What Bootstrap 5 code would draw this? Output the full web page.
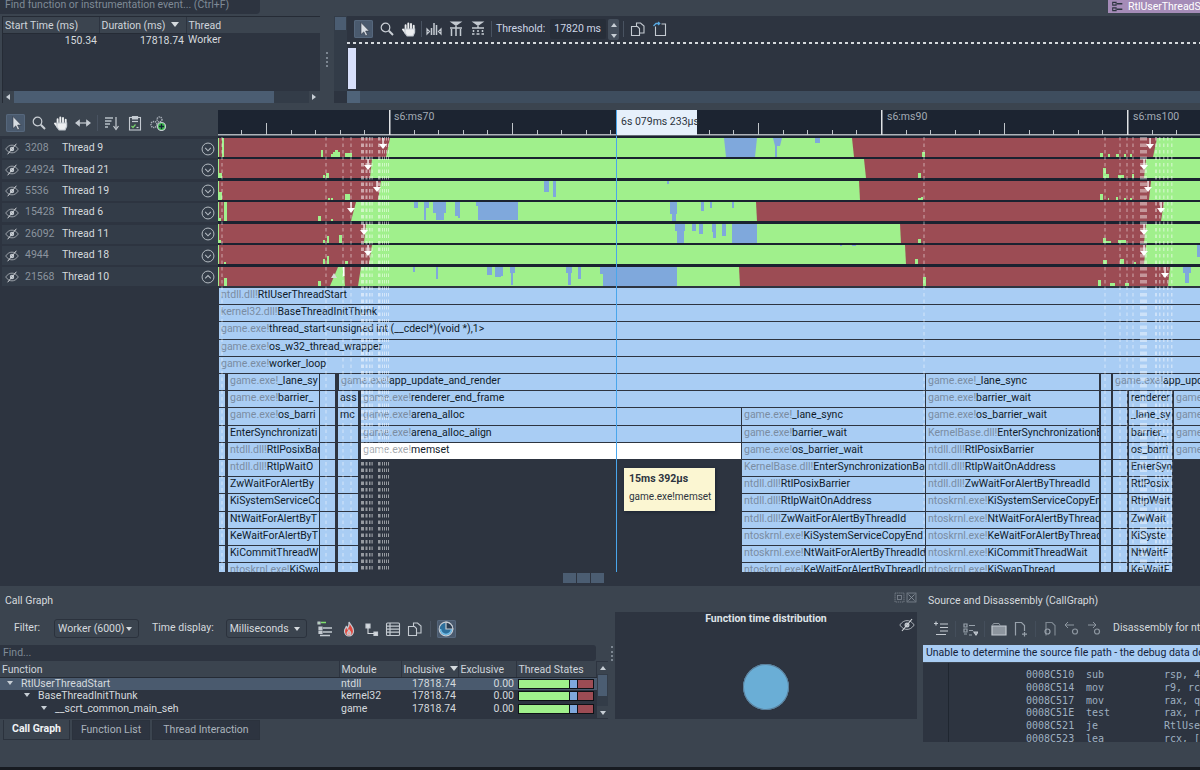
<!doctype html>
<html lang="en">
<head>
<meta charset="utf-8">
<title>Concurrency profiler</title>
<link href="https://cdn.jsdelivr.net/npm/bootstrap@5.3.0/dist/css/bootstrap.min.css" rel="stylesheet">
<style>
:root{--panel:#3b444f;--deep:#2d3440;--rowbg:#333c48;--sel:#4a5a6e;--txt:#d5dade;--dim:#8b949e;--line:#4b5562}
html,body{width:1200px;height:770px;overflow:hidden}
body{background:var(--panel);color:var(--txt);font-family:Roboto,"Noto Sans",sans-serif;font-size:10.5px;line-height:1.2}
.app{width:1200px;height:770px}
.topbar{height:15px;flex:none;overflow:hidden}
.searchbox{width:260px;height:14px;background:var(--deep);border-bottom-right-radius:4px;color:#7f8a96;padding-left:5px;font-size:10.5px;line-height:9px;overflow:hidden;white-space:nowrap}
.stacktag{width:92px;height:13px;background:#a58cb8;color:#fff;font-size:10.5px;line-height:11px;white-space:nowrap;overflow:hidden;gap:5px;padding-left:4px}
.stacktag .ico{width:11px;height:11px}
.summary{height:88px;flex:none;padding-top:1px}
.evpane{width:318px;margin-left:2px;background:var(--deep);border:1px solid #252b35;border-width:1px 0 0 1px}
.grid-t{--bs-table-bg:transparent;--bs-table-color:var(--txt);--bs-table-border-color:transparent;table-layout:fixed;margin:0;color:var(--txt);font-size:10.5px}
.grid-t th,.grid-t td{padding:0 2px;background:transparent;color:var(--txt);border:0;white-space:nowrap;overflow:hidden;font-weight:400;box-shadow:none}
.grid-t th{height:16px;background:var(--panel);border-right:1px solid #2d3440;border-bottom:1px solid #252b35;color:#cfd5db}
.evtable{width:317px}
.evtable td{line-height:14px}
.c-96{width:96px}.c-87{width:87px}.c-339{width:339px}.c-62{width:62px}.c-57{width:57px}.c-58{width:58px}
.sortdn::after{content:"";display:inline-block;border:4px solid transparent;border-top:5px solid #d5dade;border-bottom:0;margin-left:5px;vertical-align:2px}
.hscroll{height:12px;background:#333c48;flex:none}
.arrbtn{width:11px;height:12px;background:var(--panel);position:relative;flex:none}
.arr-l::after,.arr-r::after,.arr-u::after,.arr-d::after{content:"";position:absolute;left:3px;top:3px;border:3px solid transparent}
.arr-l::after{border-right:4px solid #c7ced5;border-left:0}
.arr-r::after{border-left:4px solid #c7ced5;border-right:0}
.arr-u::after{border-bottom:4px solid #c7ced5;border-top:0;top:4px;left:3px}
.arr-d::after{border-top:4px solid #c7ced5;border-bottom:0;top:5px;left:3px}
.thumb{background:#4b5d72}
.thumb-h{width:260px}
.thumb-v{height:21px;margin:1px}
.gripcol{width:14px;flex:none}
.gripv{width:2px;height:15px;border-left:2px dotted #7c8691}
.histpane{background:var(--deep);min-width:0}
.histmain{min-height:0}
.histcol{min-width:0}
.vbar{width:13px;background:#333c48;flex:none}
.vthumb{height:13px;margin:1px;background:#4b5d72}
.tbar{gap:6px;height:26px;padding-left:7px;align-items:center;background:var(--deep);flex:none}
.tb{--bs-btn-padding-x:0;--bs-btn-padding-y:0;--bs-btn-border-width:0;width:16px;height:18px;display:inline-flex;align-items:center;justify-content:center;border-radius:2px;flex:none}
.tb.on{width:19px;background:var(--sel);box-shadow:inset 0 0 0 1px #56677c}
.ico{width:16px;height:16px;fill:none;stroke:#c4cad1;stroke-width:1.2;flex:none;display:block}
.tsep{width:1px;height:16px;background:#495361;flex:none}
.sep-a{margin:0 -2px}.sep-b{margin:0 -2px 0 -1px}.sep-c{margin-left:-2px}
.sep-dim{opacity:.7}
.ms-1px{margin-left:1px}
.thlabel{color:#cdd6e6;font-size:10.5px}
.spinbox{width:56px;height:20px;background:#272e39;color:#cdd6e6;padding-left:4px;line-height:19px;border-radius:2px;font-size:10.5px;margin-left:-1px}
.spinbtns{width:11px;height:21px;background:#444e5b;position:relative;border-radius:2px;margin-left:-4px}
.spin-u,.spin-d{position:absolute;left:0;right:0;display:block;height:50%}
.spin-u{top:0}.spin-d{bottom:0}
.dashrule{height:2px;flex:none;background:repeating-linear-gradient(90deg,#d5d9dd 0 3px,transparent 3px 6px)}
.minibar{width:8px;height:41px;background:#d8e0fb;margin:4px 0 0 1px}
.hscroll2{height:12px;flex:none;background:#3e4d5e;margin-left:13px}
.hthumb2{width:13px;background:#4f6379}
.bandgap{height:7px;flex:none}
.rulerrow{height:26px;flex:none}
.rulertools{width:218px;flex:none;gap:6px;padding-left:6px;align-items:center}
.rulertools .tb-shift{margin-left:1px}
.rulerbox{width:982px;height:26px;background:#1c2431;position:relative;overflow:hidden}
.rulersvg{display:block;position:absolute;left:0;top:0;width:982px;height:26px}
.rlabel{position:absolute;top:1px;color:#a3abb5;font-size:10.5px}
.rl-70{left:176px}.rl-90{left:669px}.rl-100{left:915px}
.nowbox{position:absolute;left:398px;top:0;width:81px;height:25px;background:#e6f0fb;color:#2d3440;line-height:23px;padding-left:4px;font-size:10.5px;white-space:nowrap;border-left:1px solid #49a6ec}
.timeline{height:436px;flex:none;background:var(--deep)}
.threads{width:218px;flex:none;padding:3px 0 0 2px;gap:2.42px}
.thr{height:19px;background:var(--rowbg);color:var(--txt);flex:none}
.thr .pid{width:37px;color:var(--dim);margin-left:6px;flex:none;font-size:10.5px}
.thr .nm{flex:1;font-size:10.5px}
.thr .eyeico{width:14px;height:14px;margin-left:3px}
.thr .chev{width:14px;height:14px;margin-right:3px}
.canvas{width:982px;position:relative;overflow:hidden}
.tracks{display:block;width:982px;height:150px}
.flame{position:relative;height:286px;overflow:hidden}
.fb{position:absolute;height:16.2px;background:#a9cdf4;color:#101b2a;line-height:14px;padding-left:2px;overflow:hidden;white-space:nowrap;font-size:10.5px}
.fb i{font-style:normal;color:#7a8ca2}
.fb.hot{background:#fff}
.fb.hot i{color:#a4a8ad}
.overlay{position:absolute;left:0;top:0;width:982px;height:436px;pointer-events:none}
.cursorline{position:absolute;left:398px;top:0;bottom:0;width:1px;background:#49a6ec}
.tip{position:absolute;left:406px;top:332px;width:91px;height:43px;background:#fbf6d2;color:#2d3440;padding:5px 5px;font-size:10px;box-shadow:1px 1px 3px #1a2230;z-index:3;white-space:nowrap}
.tip b{display:block;font-size:10.5px;margin-bottom:5px;font-weight:700}
.strip{height:14px;flex:none;background:var(--deep);gap:1px;padding:1px 0 0 563px}
.strip span{display:block;width:13px;height:10px;background:#4b5d72}
.bottom{height:156px;flex:none}
.cgpanel{width:918px;flex:none;min-width:0}
.srcpanel{margin-left:5px;min-width:0;flex:1;overflow:hidden}
.ptitle{height:26px;padding:9px 0 0 5px;font-size:10.5px;flex:none;color:#d5dade}
.wincontrols{gap:1px;margin:-3px 1px 0 0}
.wincontrols .ico{width:11px;height:11px}
.cgbody{height:107px;flex:none}
.cgmain{width:608px;flex:none}
.cgtools{height:33px;flex:none;padding-left:14px;align-items:center}
.ddt{--bs-btn-padding-y:0;--bs-btn-padding-x:3px;--bs-btn-font-size:10.5px;--bs-btn-color:#d5dade;--bs-btn-border-color:#2b323d;--bs-btn-hover-color:#d5dade;--bs-btn-border-radius:3px;height:19px;line-height:17px;background:var(--panel);display:inline-flex;align-items:center;justify-content:space-between;color:#d5dade;border:1px solid #2b323d;flex:none}
.ddt::after{border-top:.4em solid #d5dade;border-right:.35em solid transparent;border-left:.35em solid transparent;border-bottom:0;margin:0 3px 0 0}
.dd-f{width:85px;margin-left:14px}
.dd-t{width:81px;margin-left:12px}
.lb-time{margin-left:13px}
.tb-a{margin-left:10px}.tb-b{margin-left:8px}.tb-c{margin-left:6px}
.sep-d{margin:0 6px 0 7px}
.findbox{height:16px;padding:0 3px;background:var(--deep);font-size:10.5px;color:#7f8a96;line-height:15px;flex:none;width:596px;border-radius:0 3px 3px 0}
.cgwrap{background:var(--deep);height:58px;align-items:flex-start;width:608px}
.cgtable{width:597px}
.cgtable th{height:16px}
.cgtable td{height:13px;line-height:12px;padding:0 2px}
.cgtable tr.picked td{background:var(--sel)}
.tri{display:inline-block;border:3.5px solid transparent;border-top:4px solid #c7ced5;border-bottom:0;margin-right:8px;vertical-align:2px}
.stbar{display:flex;height:10px;width:76px;background:#0e1116;padding:1px;gap:1px;margin-top:1px}
.stbar span{display:block}
.st-g{width:50px;background:#a0f08c}.st-b{width:7px;background:#7fa8dc}.st-r{flex:1;background:#9c4c54}
.cgscroll{width:11px;background:#333c48;flex:none;margin-top:1px;height:56px}
.cgscroll .arrbtn{width:100%;height:12px}
.griplow{width:7px}
.griplow .gripv{margin-top:-25px}
.cgdist{width:302px;background:var(--deep);flex:none;position:relative}
.dtitle{font-weight:700;font-size:10.5px;text-align:center;padding-top:1px;color:#dfe3e7}
.dball{width:46px;height:46px;border-radius:50%;background:#6aaed6;box-shadow:inset 0 0 0 1px #5b7f9a;margin:38px auto 0}
.deye{position:absolute;right:2px;top:5px}
.ntab{--bs-nav-tabs-border-width:0;--bs-nav-link-padding-x:0;--bs-nav-link-padding-y:0;--bs-nav-tabs-border-radius:0;height:21px;flex:none;padding:1px 0 0 3px;gap:2px}
.ntab .nav-link{height:20px;line-height:18px;background:var(--deep);color:#aab3bc;text-align:center;font-size:10.5px;border:1px solid #2b323d}
.ntab .nav-link.active{background:var(--panel);color:#f0f3f5;font-weight:700;border-color:#2b323d;border-top:0}
.t-cg{width:67px}.t-fl{width:78px}.t-ti{width:108px}
.srctools{height:33px;flex:none;padding-left:10px;gap:6px;align-items:center;white-space:nowrap}
.disasm{margin-left:5px}
.banner{background:#a9cdf4;color:#13223a;height:17px;line-height:16px;padding-left:3px;flex:none;white-space:nowrap;overflow:hidden;font-size:10.5px}
.codepane{background:var(--deep);height:79px;overflow:hidden;margin-top:1px;padding-top:6px;font-family:"DejaVu Sans Mono",monospace;font-size:10px;color:#9fb0c0;position:relative}
.codepane::before{content:"";position:absolute;left:25px;top:0;bottom:0;width:1px;background:#1f2630}
.cline{height:12.8px;line-height:12.8px;padding-left:103px;white-space:nowrap}
.cline b{font-weight:400;display:inline-block;width:60px}
.cline u{text-decoration:none;display:inline-block;width:78px}
.footbar{height:25px;flex:none}
.blackbar{height:3px;flex:none;background:#171b21}
</style>
</head>
<body>
<svg width="0" height="0" class="position-absolute">
<defs>
<symbol id="i-arrow" viewBox="0 0 16 16"><path d="M5 1.5v12l2.8-2.6 1.9 4 1.8-.9-1.9-3.9h3.7z" fill="#d8dde3" stroke="#2d3440" stroke-width=".6"/></symbol>
<symbol id="i-mag" viewBox="0 0 16 16"><circle cx="6.5" cy="6.5" r="4.3" fill="none" stroke="#c9ced4" stroke-width="1.2"/><path d="M9.8 9.8 14 14" stroke="#c9ced4" stroke-width="2"/></symbol>
<symbol id="i-hand" viewBox="0 0 16 16"><g stroke="#eceef0" stroke-width="1.9" stroke-linecap="round"><path d="M4.6 9V4.2M7.3 8V2.4M10 8V3M12.7 9V4.8M2 8.4l2.6 3.6"/></g><path d="M4 8h9.6v3.4L12 15H6.2L4 12z" fill="#eceef0"/></symbol>
<symbol id="i-bars" viewBox="0 0 16 16"><g stroke="#c4cad1" stroke-width="1.5"><path d="M5.5 7v7M8 2v12M10.5 4v10"/></g><path d="M1 8l2.5 2.5L1 13zM15 8l-2.5 2.5L15 13z" fill="none" stroke="#c4cad1"/></symbol>
<symbol id="i-tree1" viewBox="0 0 16 16"><path d="M3.5 1h9L8 4.2z" fill="#c4cad1"/><g stroke="#c4cad1" stroke-width="1.5"><path d="M2 7h12M3.5 8v7M8 5v10M12.5 8v7"/></g></symbol>
<symbol id="i-tree2" viewBox="0 0 16 16"><path d="M3.5 1h9L8 4.2z" fill="#c4cad1"/><g stroke="#c4cad1" stroke-width="1.5"><path d="M2 7h12M3.5 9v2M8 5v2M8 9v2M12.5 9v2M2 13h2.500M6.500 13h3M11.500 13h2.500"/></g></symbol>
<symbol id="i-copy" viewBox="0 0 16 16"><g fill="none" stroke="#c4cad1" stroke-width="1.1"><path d="M1.500 5.500h6l2 2v7h-8z"/><path d="M6.500 5V2h4l3.500 3v7h-4.500"/></g></symbol>
<symbol id="i-paste" viewBox="0 0 16 16"><g fill="none" stroke="#c4cad1" stroke-width="1.1"><path d="M3.500 5.500V14.500h10V3h-4"/><path d="M1.500 5 4 2.500h3.500" stroke="#58a9e2" stroke-width="1.300"/><path d="M6 1l1.800 1.500L6 4" stroke="#58a9e2"/></g></symbol>
<symbol id="i-resize" viewBox="0 0 16 16"><path d="M3 8h10" stroke="#c9ced4" stroke-width="1.200"/><path d="M1 8l3.200-2.500v5zM15 8l-3.200-2.500v5z" fill="#c9ced4"/></symbol>
<symbol id="i-sort" viewBox="0 0 16 16"><g stroke="#b7bec6" stroke-width="1.500"><path d="M1 3h8M1 6h6.500M1 9h5M1 12h3"/></g><path d="M12 2v11" stroke="#c9ced4" stroke-width="1.200"/><path d="M9.500 11l2.500 3.500 2.500-3.500" fill="none" stroke="#c9ced4" stroke-width="1.200"/></symbol>
<symbol id="i-report" viewBox="0 0 16 16"><rect x="2.500" y="2.500" width="11" height="12.500" fill="none" stroke="#c4cad1" stroke-width="1.100"/><path d="M5.500 1.500h5v2.500h-5z" fill="#c4cad1"/><path d="M5 6.500h6" stroke="#c4cad1"/><path d="M4.500 11l1.500 1.500 2.500-3" fill="none" stroke="#77d06c" stroke-width="1.200"/><path d="M9.500 12.500h2" stroke="#c4cad1"/></symbol>
<symbol id="i-gear" viewBox="0 0 16 16"><circle cx="9.500" cy="4.500" r="2.500" fill="none" stroke="#aab1b9" stroke-width="1.400" stroke-dasharray="1.300 .8"/><circle cx="4" cy="9.500" r="3" fill="none" stroke="#aab1b9" stroke-width="1.500" stroke-dasharray="1.300 .8"/><circle cx="11.500" cy="11.500" r="4" fill="#39b54a"/><path d="M9 11.500h5M11.500 9v5" stroke="#123" stroke-width="1.300"/></symbol>
<symbol id="i-eye" viewBox="0 0 16 16"><path d="M.8 8C3 4.800 5.500 3.600 8 3.600S13 4.800 15.200 8C13 11.200 10.500 12.400 8 12.400S3 11.200.8 8z" fill="none" stroke="#a9afb6" stroke-width="1"/><circle cx="8" cy="8" r="1.900" fill="#9aa1a9"/><path d="M3 14 13 2" stroke="#d5d9dd" stroke-width="1.100"/></symbol>
<symbol id="i-cd" viewBox="0 0 16 16"><circle cx="8" cy="8" r="6.800" fill="none" stroke="#b6bdc4" stroke-width="1.100"/><path d="M4.800 6.800 8 10l3.200-3.200" fill="none" stroke="#b6bdc4" stroke-width="1.200"/></symbol>
<symbol id="i-cu" viewBox="0 0 16 16"><circle cx="8" cy="8" r="6.800" fill="none" stroke="#b6bdc4" stroke-width="1.100"/><path d="M4.800 9.500 8 6.300l3.200 3.200" fill="none" stroke="#b6bdc4" stroke-width="1.200"/></symbol>
<symbol id="i-list" viewBox="0 0 16 16"><path d="M4 1.500h5" stroke="#7fe06c" stroke-width="1.500"/><path d="M1 1h2v2h-2z" fill="#7fe06c"/><g stroke="#c4cad1" stroke-width="1.400"><path d="M6 7h9M6 11h9M3 14.500h10"/></g><path d="M2 6h3v2.500H2zM2 10h3v2.500H2z" fill="#c4cad1"/></symbol>
<symbol id="i-flame" viewBox="0 0 16 16"><path d="M8 1c.8 2.500 4.500 4.500 4.500 9 0 3-2 5-4.500 5s-4.500-2-4.500-4.800c0-2.200 1.300-3.200 1.800-4.700.8.700 1 1.500 1.100 2.200C7.500 6.200 8.400 3.500 8 1z" fill="#e2453b"/><path d="M8 9c.6 1.200 1.800 1.800 1.800 3.300A1.900 1.900 0 0 1 6.100 12.300C6.100 11 7.600 10.400 8 9z" fill="#f3a29b"/></symbol>
<symbol id="i-gtree" viewBox="0 0 16 16"><path d="M3 3h4v4H3zM11 11h3.500v3.500H11z" fill="#d5dade"/><path d="M5 7v5.500h6" fill="none" stroke="#d5dade" stroke-width="1.100"/></symbol>
<symbol id="i-table" viewBox="0 0 16 16"><rect x="1.500" y="2" width="13" height="12.500" rx="1" fill="none" stroke="#c4cad1" stroke-width="1.100"/><path d="M1.500 5.200h13M1.500 8.200h13M1.500 11.200h13M5 2v12.500" stroke="#c4cad1" fill="none"/></symbol>
<symbol id="i-pie" viewBox="0 0 16 16"><circle cx="8" cy="8" r="6.800" fill="#2d6f9c"/><path d="M8 8V1.200A6.800 6.800 0 0 1 14.800 8z" fill="#2b3d52"/><path d="M2.500 8a5.500 5.500 0 0 0 11 0" fill="none" stroke="#74bde6" stroke-width="1.500"/></symbol>
<symbol id="i-indent" viewBox="0 0 16 16"><g stroke="#c4cad1" stroke-width="1.200"><path d="M7 3h8M7 6.500h8M7 10h8M3 13.500h10"/><path d="M1 2.500h4M3 .5v4"/></g></symbol>
<symbol id="i-outline" viewBox="0 0 16 16"><g stroke="#98a1ab" fill="none"><path d="M2 3h3v3H2zM2 8h3v3H2zM2 13h3"/><path d="M7 4.500h6M7 9.500h4M7 14h3"/></g><path d="M12 11h4l-2 3z" fill="#98a1ab"/></symbol>
<symbol id="i-folder" viewBox="0 0 16 16"><path d="M1 5h14v9H1z" fill="#8d959e"/><path d="M1 5l1.500-2.500H8L9.500 5" fill="none" stroke="#8d959e" stroke-width="1"/></symbol>
<symbol id="i-fplus" viewBox="0 0 16 16"><path d="M2.500 14.500V1.500h6l3 3V10" fill="none" stroke="#98a1ab" stroke-width="1.200"/><path d="M11.500 11v4.500M9 13.200h5" stroke="#98a1ab" stroke-width="1.200"/></symbol>
<symbol id="i-fmag" viewBox="0 0 16 16"><path d="M4 14.500V1.500h6l3 3v10" fill="none" stroke="#7e8791" stroke-width="1.200"/><circle cx="5.500" cy="10.500" r="2.500" fill="none" stroke="#98a1ab"/></symbol>
<symbol id="i-back" viewBox="0 0 16 16"><path d="M1 4h9M4 1 1 4l3 3" fill="none" stroke="#8e97a1" stroke-width="1"/><circle cx="11" cy="10.500" r="2.500" fill="none" stroke="#8e97a1"/></symbol>
<symbol id="i-fwd" viewBox="0 0 16 16"><path d="M2 4h8M7 1l3 3-3 3" fill="none" stroke="#8e97a1" stroke-width="1"/><circle cx="11" cy="10.500" r="2.500" fill="none" stroke="#8e97a1"/></symbol>
<symbol id="i-float" viewBox="0 0 16 16"><rect x="1.500" y="1.500" width="13" height="13" fill="none" stroke="#7e8791" stroke-dasharray="2 1"/><rect x="5" y="5" width="6" height="6" fill="none" stroke="#7e8791"/></symbol>
<symbol id="i-close" viewBox="0 0 16 16"><rect x="1.500" y="1.500" width="13" height="13" fill="none" stroke="#7e8791"/><path d="M3.500 3.500l9 9M12.500 3.500l-9 9" stroke="#8e97a1" stroke-width="1.200"/></symbol>
<symbol id="i-stack" viewBox="0 0 16 16"><path d="M1 2h5v4H1zM1 10h5v4H1z" fill="none" stroke="#2d3440" stroke-width="1.500"/><path d="M7 4h8M7 12h8" stroke="#2d3440" stroke-width="2.200"/></symbol>
</defs>
</svg>

<div class="app d-flex flex-column">

  <header class="topbar d-flex justify-content-between">
    <div class="searchbox">Find function or instrumentation event... (Ctrl+F)</div>
    <div class="stacktag d-flex align-items-center"><svg class="ico"><use href="#i-stack"/></svg><span>RtlUserThreadStart</span></div>
  </header>

  <section class="summary d-flex">
    <div class="evpane d-flex flex-column">
      <table class="table grid-t evtable">
        <colgroup><col class="c-96"><col class="c-87"><col></colgroup>
        <thead><tr><th>Start Time (ms)</th><th class="text-start">Duration (ms)<span class="sortdn"></span></th><th class="border-0">Thread</th></tr></thead>
        <tbody><tr><td class="text-end">150.34</td><td class="text-end">17818.74</td><td>Worker</td></tr></tbody>
      </table>
      <div class="hscroll d-flex mt-auto">
        <span class="arrbtn arr-l"></span>
        <span class="thumb thumb-h"></span>
        <span class="ms-auto arrbtn arr-r"></span>
      </div>
    </div>
    <div class="gripcol d-flex align-items-center justify-content-center"><span class="gripv"></span></div>
    <div class="histpane flex-grow-1 d-flex flex-column">
      <div class="histmain d-flex flex-grow-1">
        <div class="vbar"><div class="vthumb"></div></div>
        <div class="histcol flex-grow-1 d-flex flex-column">
          <div class="tbar d-flex">
            <button class="btn tb on"><svg class="ico"><use href="#i-arrow"/></svg></button>
            <button class="btn tb"><svg class="ico"><use href="#i-mag"/></svg></button>
            <button class="btn tb"><svg class="ico"><use href="#i-hand"/></svg></button>
            <span class="tsep sep-a"></span>
            <button class="btn tb"><svg class="ico"><use href="#i-bars"/></svg></button>
            <button class="btn tb"><svg class="ico"><use href="#i-tree1"/></svg></button>
            <button class="btn tb"><svg class="ico"><use href="#i-tree2"/></svg></button>
            <span class="tsep sep-b"></span>
            <span class="thlabel">Threshold:</span>
            <span class="spinbox">17820 ms</span>
            <span class="spinbtns"><i class="arr-u spin-u"></i><i class="arr-d spin-d"></i></span>
            <span class="tsep sep-c"></span>
            <button class="btn tb"><svg class="ico"><use href="#i-copy"/></svg></button>
            <button class="btn tb"><svg class="ico"><use href="#i-paste"/></svg></button>
          </div>
          <div class="dashrule"></div>
          <div class="minibar"></div>
        </div>
      </div>
      <div class="hscroll2 d-flex"><span class="hthumb2"></span></div>
    </div>
  </section>

  <div class="bandgap"></div>

  <section class="rulerrow d-flex">
    <div class="rulertools d-flex">
      <button class="btn tb on"><svg class="ico"><use href="#i-arrow"/></svg></button>
      <button class="btn tb"><svg class="ico"><use href="#i-mag"/></svg></button>
      <button class="btn tb"><svg class="ico"><use href="#i-hand"/></svg></button>
      <button class="btn tb"><svg class="ico"><use href="#i-resize"/></svg></button>
      <span class="tsep"></span>
      <button class="btn tb"><svg class="ico"><use href="#i-sort"/></svg></button>
      <button class="btn tb tb-shift"><svg class="ico"><use href="#i-report"/></svg></button>
      <button class="btn tb tb-shift"><svg class="ico"><use href="#i-gear"/></svg></button>
    </div>
    <div class="rulerbox" id="ruler">
      <svg class="rulersvg" id="rulersvg" viewBox="218 110 982 26"></svg>
      <span class="rlabel rl-70">s6:ms70</span>
      <span class="rlabel rl-90">s6:ms90</span>
      <span class="rlabel rl-100">s6:ms100</span>
      <span class="nowbox">6s 079ms 233µs</span>
    </div>
  </section>

  <section class="timeline d-flex">
    <div class="threads d-flex flex-column" id="threads"></div>
    <div class="canvas">
      <svg class="tracks" id="tracks" viewBox="218 136 982 150"></svg>
      <div class="flame" id="flame"></div>
      <svg class="overlay" id="overlay" viewBox="218 136 982 436"></svg>
      <div class="cursorline"></div>
      <div class="tip"><b>15ms 392µs</b>game.exe!memset</div>
    </div>
  </section>

  <div class="strip d-flex"><span></span><span></span><span></span></div>

  <section class="bottom d-flex">
    <div class="cgpanel d-flex flex-column">
      <div class="ptitle d-flex justify-content-between">Call Graph
        <span class="wincontrols d-flex"><svg class="ico"><use href="#i-float"/></svg><svg class="ico"><use href="#i-close"/></svg></span>
      </div>
      <div class="cgbody d-flex">
        <div class="cgmain d-flex flex-column">
          <div class="cgtools d-flex">
            <span>Filter:</span>
            <button class="btn ddt dropdown-toggle dd-f">Worker (6000)</button>
            <span class="lb-time">Time display:</span>
            <button class="btn ddt dropdown-toggle dd-t">Milliseconds</button>
            <button class="btn tb tb-a"><svg class="ico"><use href="#i-list"/></svg></button>
            <button class="btn tb tb-b"><svg class="ico"><use href="#i-flame"/></svg></button>
            <button class="btn tb tb-c"><svg class="ico"><use href="#i-gtree"/></svg></button>
            <button class="btn tb tb-c"><svg class="ico"><use href="#i-table"/></svg></button>
            <button class="btn tb tb-c"><svg class="ico"><use href="#i-copy"/></svg></button>
            <span class="tsep sep-d"></span>
            <button class="btn tb on"><svg class="ico"><use href="#i-pie"/></svg></button>
          </div>
          <div class="findbox">Find...</div>
          <div class="cgwrap d-flex">
            <table class="table grid-t cgtable">
              <colgroup><col class="c-339"><col class="c-62"><col class="c-57"><col class="c-58"><col></colgroup>
              <thead><tr><th>Function</th><th>Module</th><th>Inclusive<span class="sortdn"></span></th><th>Exclusive</th><th>Thread States</th></tr></thead>
              <tbody id="cgrows"></tbody>
            </table>
            <div class="cgscroll d-flex flex-column">
              <span class="arrbtn arr-u"></span>
              <span class="thumb thumb-v"></span>
              <span class="arrbtn arr-d mt-auto"></span>
            </div>
          </div>
        </div>
        <div class="gripcol griplow d-flex align-items-center justify-content-center"><span class="gripv"></span></div>
        <div class="cgdist">
          <div class="dtitle">Function time distribution</div>
          <svg class="ico deye"><use href="#i-eye"/></svg>
          <div class="dball"></div>
        </div>
      </div>
      <ul class="nav nav-tabs ntab">
        <li class="nav-item"><a class="nav-link active t-cg" href="#">Call Graph</a></li>
        <li class="nav-item"><a class="nav-link t-fl" href="#">Function List</a></li>
        <li class="nav-item"><a class="nav-link t-ti" href="#">Thread Interaction</a></li>
      </ul>
    </div>
    <div class="srcpanel d-flex flex-column">
      <div class="ptitle">Source and Disassembly (CallGraph)</div>
      <div class="srctools d-flex">
        <svg class="ico"><use href="#i-indent"/></svg>
        <span class="tsep sep-dim"></span>
        <svg class="ico"><use href="#i-outline"/></svg>
        <span class="tsep sep-dim"></span>
        <svg class="ico"><use href="#i-folder"/></svg>
        <svg class="ico"><use href="#i-fplus"/></svg>
        <span class="tsep sep-dim"></span>
        <svg class="ico"><use href="#i-fmag"/></svg>
        <svg class="ico"><use href="#i-back"/></svg>
        <svg class="ico"><use href="#i-fwd"/></svg>
        <span class="disasm">Disassembly for ntdll.dll</span>
      </div>
      <div class="banner">Unable to determine the source file path - the debug data does not contain it</div>
      <div class="codepane">
        <div class="cline"><b>0008C510</b><u>sub</u>rsp, 48h</div>
        <div class="cline"><b>0008C514</b><u>mov</u>r9, rcx</div>
        <div class="cline"><b>0008C517</b><u>mov</u>rax, qword</div>
        <div class="cline"><b>0008C51E</b><u>test</u>rax, rax</div>
        <div class="cline"><b>0008C521</b><u>je</u>RtlUserThread</div>
        <div class="cline"><b>0008C523</b><u>lea</u>rcx, [rsp+20h]</div>
      </div>
    </div>
  </section>

  <div class="footbar"></div>
  <div class="blackbar"></div>
</div>

<script>
const NS='http://www.w3.org/2000/svg';
const svgAdd=(p,n,a)=>{const e=document.createElementNS(NS,n);for(const k in a)e.setAttribute(k,a[k]);p.appendChild(e);return e;};

/* threads */
const threadData=[['3208','Thread 9'],['24924','Thread 21'],['5536','Thread 19'],['15428','Thread 6'],['26092','Thread 11'],['4944','Thread 18'],['21568','Thread 10']];
document.getElementById('threads').innerHTML=threadData.map((t,i)=>`<div class="thr d-flex align-items-center"><svg class="ico eyeico"><use href="#i-eye"/></svg><span class="pid">${t[0]}</span><span class="nm">${t[1]}</span><svg class="ico chev"><use href="#i-${i==6?'cu':'cd'}"/></svg></div>`).join('');

/* ruler */
const rs=document.getElementById('rulersvg');
svgAdd(rs,'rect',{x:218,y:134,width:982,height:1.5,fill:'#aeb3b9'});
for(let i=4;i<60;i++){const x=143+i*24.6;
  const n=i%10; if(n==0)continue;
  const tall=n==5;
  svgAdd(rs,'rect',{x:Math.round(x),y:tall?123:130,width:1,height:tall?12:5,fill:'#c0c5ca'});
}
[389,881,1127].forEach(x=>svgAdd(rs,'rect',{x:x,y:110,width:1.5,height:25,fill:'#dfe2e5'}));

/* tracks */
const G='#a0f08c',R='#9c4c54',B='#7fa8dc';
const ty=[138,159,181,202,224,245,267];
const tr=document.getElementById('tracks');
svgAdd(tr,'rect',{x:218,y:136,width:982,height:150,fill:'#1a2230'});
const rowsData=[
 {red:[[219,219,390,386],[852,854,1157,1153]],
  blue:[[724,757,19,2],[773,782,8,2],[775,777,19,0],[815,820,5,0]],
  sp:[[222,2,19],[321,2,7],[331,2,3],[333,2,5],[335,3,7],[338,2,5],[345,7,4],[922,3,5],[1100,3,4],[1108,2,3],[1116,3,3],[1124,2,3],[1130,2,3]],ar:[383,1150]},
 {red:[[219,219,372,370],[864,866,1146,1144]],
  blue:[],
  sp:[[219,3,5],[323,2,3],[326,3,5],[918,3,5],[1103,3,10],[1106,3,4],[1118,6,3],[1132,2,4]],ar:[368,1144]},
 {red:[[219,219,381,378],[859,860,1151,1149]],
  blue:[[544,549,11,0],[553,556,16,0],[667,669,3,0]],
  sp:[[219,3,8],[328,2,2],[331,2,2],[345,5,6],[918,5,2],[921,2,3],[1100,3,6],[1108,1,2],[1116,2,3],[1124,2,2],[1130,2,2]],ar:[377,1148]},
 {red:[[219,219,356,351],[756,757,1164,1161]],
  blue:[[414,418,6,0],[424,429,6,0],[424,426,18,0],[433,446,11,0],[436,444,18,0],[455,460,14,0],[458,460,16,0],[476,518,4,0],[478,518,18,0],[670,677,12,0],[672,676,19,0],[701,704,9,0],[710,712,6,0],[732,734,6,0]],
  sp:[[219,2,3],[224,3,19],[318,3,5],[331,2,2]],ar:[351,1161]},
 {red:[[219,219,366,364],[900,901,1146,1144]],
  blue:[[675,685,7,0],[677,684,19,0],[692,696,7,0],[699,703,10,0],[712,716,8,0],[713,716,14,0],[722,726,12,0],[732,757,19,0]],
  sp:[[219,2,3],[323,2,3],[327,2,7],[339,3,8],[918,3,4],[1103,3,5],[1106,5,2],[1118,8,3]],ar:[364,1144]},
 {red:[[219,219,372,369],[905,906,1146,1144]],
  blue:[[840,842,1,0],[852,856,1,0],[1197,1200,12,0]],
  sp:[[224,2,2],[323,2,5],[327,2,8],[345,3,3],[915,3,5],[1103,4,4],[1120,4,5],[1134,2,2]],ar:[368,1144]},
 {red:[[219,219,343,345],[344,345,361,358],[739,740,1170,1168]],
  blue:[[413,415,5,0],[436,438,12,0],[487,492,8,0],[495,501,10,0],[501,503,9,0],[510,515,6,0],[511,513,18,0],[566,572,6,0],[568,571,18,0],[578,581,12,0],[600,677,7,0],[603,677,19,0],[1183,1191,6,0],[1185,1189,16,0]],
  sp:[[224,3,8],[318,3,5],[923,3,9],[1098,3,6],[1110,5,3],[1125,4,3]],ar:[1165],wedge:[[338,343,345,330]]}
];
rowsData.forEach((r,i)=>{const y=ty[i],h=19;
  svgAdd(tr,'rect',{x:218,y:y,width:982,height:h,fill:G});
  r.red.forEach(p=>svgAdd(tr,'polygon',{points:`${p[0]},${y} ${p[2]},${y} ${p[3]},${y+h} ${p[1]},${y+h}`,fill:R}));
  (r.wedge||[]).forEach(p=>svgAdd(tr,'polygon',{points:`${p[0]},${y} ${p[1]},${y} ${p[2]},${y+h} ${p[3]},${y+h}`,fill:G}));
  r.blue.forEach(b=>svgAdd(tr,'polygon',{points:`${b[0]},${y} ${b[1]},${y} ${b[1]-b[3]},${y+b[2]} ${b[0]+b[3]},${y+b[2]}`,fill:B}));
  r.sp.forEach(s=>svgAdd(tr,'rect',{x:s[0],y:y+h-s[2],width:s[1],height:s[2],fill:G}));
  r.ar.forEach(x=>{svgAdd(tr,'rect',{x:x-.6,y:y,width:1.3,height:9,fill:'#fff'});svgAdd(tr,'polygon',{points:`${x-4},${y+6} ${x+4},${y+6} ${x},${y+11}`,fill:'#fff'});});
  if(i==6){svgAdd(tr,'polygon',{points:`331,${y+11} 337,${y+11} 334,${y+6}`,fill:'#d8dcd8'});svgAdd(tr,'rect',{x:343,y:y,width:1.500,height:9,fill:'#fff'});}
});

/* flame graph */
const fbs=[];
const add=(row,x0,x1,mod,fn,hot)=>fbs.push([row,x0,x1,mod||'',fn||'',hot]);
add(0,219,1200,'ntdll.dll!','RtlUserThreadStart');
add(1,219,1200,'kernel32.dll!','BaseThreadInitThunk');
add(2,219,1200,'game.exe!','thread_start<unsigned int (__cdecl*)(void *),1>');
add(3,219,1200,'game.exe!','os_w32_thread_wrapper');
add(4,219,1200,'game.exe!','worker_loop');
const leftCol=[['game.exe!','_lane_sy'],['game.exe!','barrier_'],['game.exe!','os_barri'],['','EnterSynchronizati'],['ntdll.dll!','RtlPosixBar'],['ntdll.dll!','RtlpWaitO'],['','ZwWaitForAlertBy'],['','KiSystemServiceCo'],['','NtWaitForAlertByT'],['','KeWaitForAlertByT'],['','KiCommitThreadW'],['ntoskrnl.exe!','KiSwa']];
const midCol=[['game.exe!','_lane_sync'],['game.exe!','barrier_wait'],['game.exe!','os_barrier_wait'],['KernelBase.dll!','EnterSynchronizationB'],['ntdll.dll!','RtlPosixBarrier'],['ntdll.dll!','RtlpWaitOnAddress'],['ntdll.dll!','ZwWaitForAlertByThreadId'],['ntoskrnl.exe!','KiSystemServiceCopyEn'],['ntoskrnl.exe!','NtWaitForAlertByThread'],['ntoskrnl.exe!','KeWaitForAlertByThread'],['ntoskrnl.exe!','KiCommitThreadWait'],['ntoskrnl.exe!','KiSwapThread']];
const rightCol=['','renderer','_lane_sy','barrier_','os_barri','EnterSyn','RtlPosix','RtlpWait','ZwWait','KiSyste','NtWaitF','KeWaitF'];
leftCol.forEach((t,i)=>{const r=5+i;
  add(r,219,225);add(r,228,319,t[0],t[1]);add(r,320,335);
  if(i>0)add(r,338,358,'',i==1?'ass':i==2?'mc':'');
  add(r,926,1099,midCol[i][0],midCol[i][1]);
  add(r,1101,1111);
  if(i==0){add(r,1113,1200,'game.exe!','app_update_and_render');}
  else{add(r,1113,1127);
    add(r,1129,1172,'',rightCol[i]);
    if(i<=4)add(r,1174,1200,'game.exe!','');
  }
});
add(5,339,924.5,'game.exe!','app_update_and_render');
add(6,361,924.5,'game.exe!','renderer_end_frame');
add(7,361,740.5,'game.exe!','arena_alloc');
add(8,361,740.5,'game.exe!','arena_alloc_align');
add(9,361,740.5,'game.exe!','memset',true);
[['game.exe!','_lane_sync'],['game.exe!','barrier_wait'],['game.exe!','os_barrier_wait'],['KernelBase.dll!','EnterSynchronizationBar'],['ntdll.dll!','RtlPosixBarrier'],['ntdll.dll!','RtlpWaitOnAddress'],['ntdll.dll!','ZwWaitForAlertByThreadId'],['ntoskrnl.exe!','KiSystemServiceCopyEnd'],['ntoskrnl.exe!','NtWaitForAlertByThreadId'],['ntoskrnl.exe!','KeWaitForAlertByThreadId']].forEach((t,i)=>add(7+i,742,924.5,t[0],t[1]));
document.getElementById('flame').innerHTML=fbs.map(b=>`<div class="fb${b[5]?' hot':''}" style="left:${b[1]-218}px;top:${(2+b[0]*17.2).toFixed(1)}px;width:${b[2]-b[1]}px">${b[3]?`<i>${b[3]}</i>`:''}${b[4].replace(/</g,'&lt;')}</div>`).join('');

/* sync-marker overlay */
const ov=document.getElementById('overlay');
const dash=(x,w,o)=>svgAdd(ov,'line',{x1:x,x2:x,y1:137,y2:572,stroke:'#fff','stroke-width':w,'stroke-dasharray':'3.5 3','stroke-opacity':o});
[222,326,343,351,924,1105,1120,1127,1133].forEach(x=>dash(x,1,.5));
[[361,3],[365.500,2],[369,1.500],[371.500,1.200],[378,2.500],[382,1],[384,1],[386,1],[388,1]].forEach(g=>dash(g[0]+g[1]/2,g[1],.5));
[[1140,7],[1155,2],[1159,1.500],[1163,1.500],[1167,1.500],[1171,1.500]].forEach(g=>dash(g[0]+g[1]/2,g[1],.42));

/* call-graph rows */
const bar='<div class="stbar"><span class="st-g"></span><span class="st-b"></span><span class="st-r"></span></div>';
document.getElementById('cgrows').innerHTML=[['RtlUserThreadStart','ntdll',7,1],['BaseThreadInitThunk','kernel32',24,0],['__scrt_common_main_seh','game',41,0]].map(r=>`<tr class="${r[3]?'picked':''}"><td style="padding-left:${r[2]}px"><span class="tri"></span>${r[0]}</td><td>${r[1]}</td><td class="text-end">17818.74</td><td class="text-end">0.00</td><td>${bar}</td></tr>`).join('');
</script>
<script src="https://cdn.jsdelivr.net/npm/bootstrap@5.3.0/dist/js/bootstrap.bundle.min.js"></script>
</body>
</html>
